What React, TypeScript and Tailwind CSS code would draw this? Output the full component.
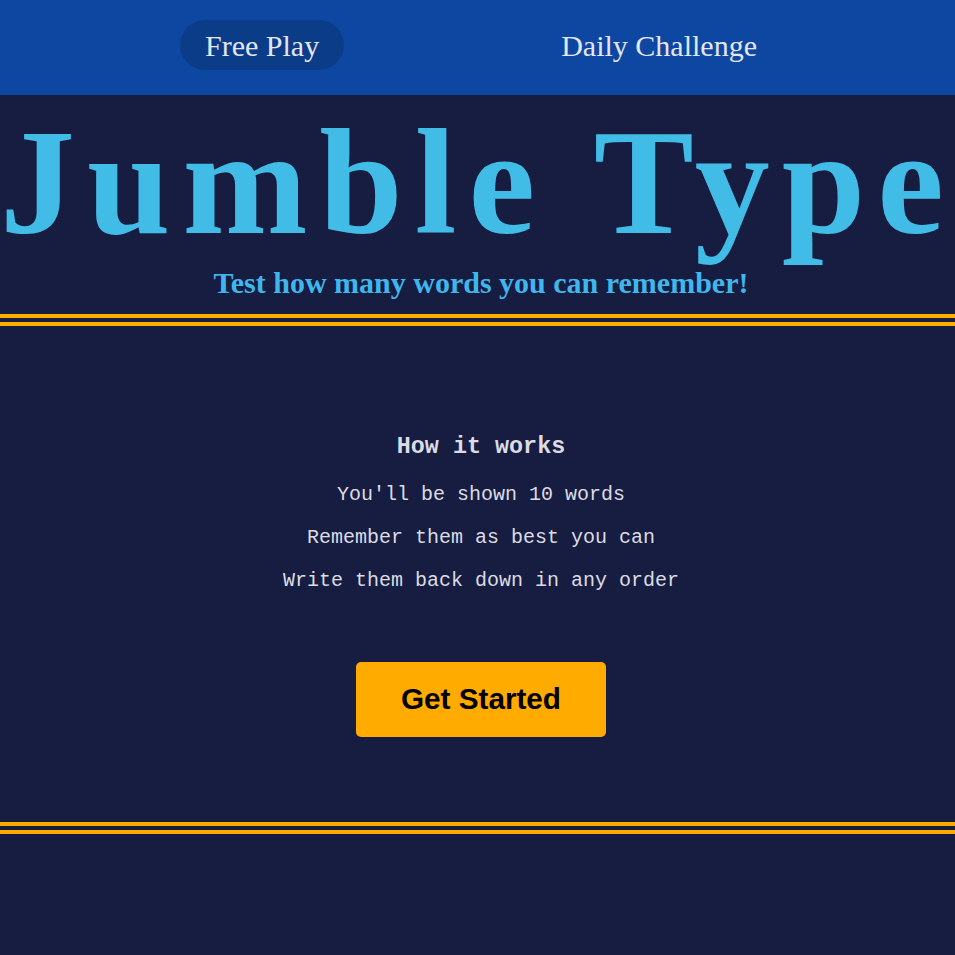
export default function App() {
  const steps = ["You'll be shown 10 words", "Remember them as best you can", "Write them back down in any order"]

  return (
    <div className="min-h-[955px] bg-[#171c41] overflow-hidden">
      {/* nav */}
      <nav className="h-[95px] bg-[#0d47a1] flex items-start justify-center gap-[192px] pt-[20px] pl-[7px] font-[Times_New_Roman,Liberation_Serif,Tinos,serif] text-[30px] text-[#e4e6f2]">
        <button className="h-[50px] px-[25px] rounded-full bg-[#0a3c88]">Free Play</button>
        <button className="h-[50px] px-[25px] rounded-full">Daily Challenge</button>
      </nav>

      {/* header */}
      <header className="text-center font-[Times_New_Roman,Liberation_Serif,Tinos,serif] text-[#41bce6]">
        <h1 className="mt-[12px] h-[150px] text-[150px] leading-[150px] font-bold tracking-[12px] whitespace-nowrap text-left">
          Jumble Type
        </h1>
        <p className="mt-[9px] pl-[7px] text-[30px] leading-[34px] font-bold text-[#3fb6ec]">Test how many words you can remember!</p>
      </header>
      <div className="mt-[14px] h-[12px] border-y-[4px] border-[#ffab00]" />

      {/* how it works */}
      <main className="flex flex-col items-center pl-[7px] font-[Courier_New,Liberation_Mono,Cousine,monospace] text-[#dcdce4]">
        <h3 className="mt-[107px] text-[23.4px] leading-[28px] font-bold">How it works</h3>
        <div className="mt-[12px] flex flex-col items-center text-[20px]">
          {steps.map((s) => (
            <p key={s} className="h-[43px] leading-[43px] whitespace-pre">
              {s}
            </p>
          ))}
        </div>
        <button className="mt-[60px] w-[250px] h-[75px] rounded-[5px] bg-[#ffab00] text-black font-[Arial,Liberation_Sans,sans-serif] font-bold text-[29.7px]">
          Get Started
        </button>
      </main>
      <div className="mt-[85px] h-[12px] border-y-[4px] border-[#ffab00]" />
    </div>
  )
}
